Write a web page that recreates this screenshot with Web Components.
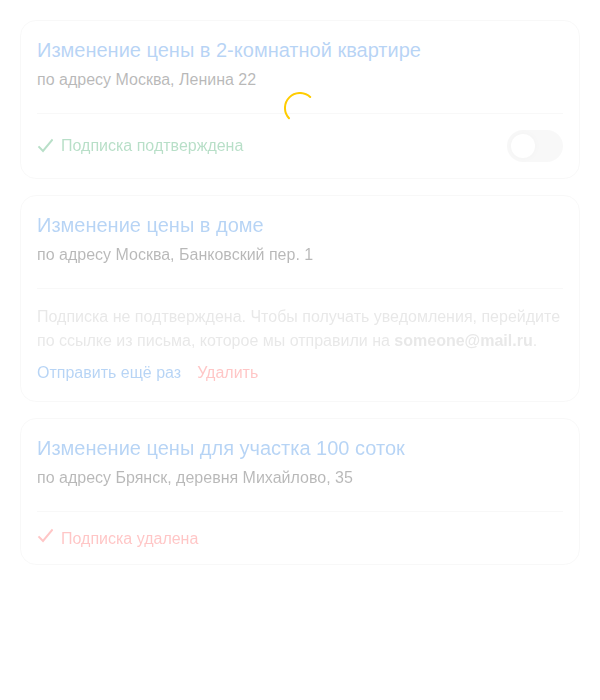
<!DOCTYPE html>
<html lang="ru">
<head>
<meta charset="utf-8">
<title>Подписки</title>
<style>
body { margin: 0; background: #fff; font-family: "Liberation Sans", Arial, sans-serif; }
</style>
</head>
<body>
<subscription-list>
  <subscription-card>
    <span slot="title">Изменение цены в 2-комнатной квартире</span>
    <span slot="address">по адресу Москва, Ленина 22</span>
    <status-row kind="ok">Подписка подтверждена<toggle-switch slot="action"></toggle-switch></status-row>
  </subscription-card>
  <subscription-card>
    <span slot="title">Изменение цены в доме</span>
    <span slot="address">по адресу Москва, Банковский пер. 1</span>
    <pending-notice email="someone@mail.ru"></pending-notice>
  </subscription-card>
  <subscription-card>
    <span slot="title">Изменение цены для участка 100 соток</span>
    <span slot="address">по адресу Брянск, деревня Михайлово, 35</span>
    <status-row kind="removed">Подписка удалена</status-row>
  </subscription-card>
</subscription-list>
<script>
function define(name, html, setup) {
  const t = document.createElement('template');
  t.innerHTML = html;
  customElements.define(name, class extends HTMLElement {
    connectedCallback() {
      if (this.shadowRoot) return;
      this.attachShadow({ mode: 'open' }).append(t.content.cloneNode(true));
      if (setup) setup(this, this.shadowRoot);
    }
  });
}

define('loading-spinner', `
<style>
:host { display: block; width: 32px; height: 32px; }
svg { display: block; }
</style>
<svg width="32" height="32" viewBox="0 0 32 32" fill="none"><path d="M5 26.2A15 15 0 0 1 26.2 5" stroke="#fc0" stroke-width="2" stroke-linecap="round"/></svg>`);

define('subscription-list', `
<style>
:host { display: block; position: relative; padding: 20px; }
.cards { display: flex; flex-direction: column; gap: 16px; opacity: .3; }
/* The spinner floats above the faded cards */
loading-spinner { position: absolute; top: 92px; left: 50%; margin-left: -16px; }
</style>
<div class="cards"><slot></slot></div>
<loading-spinner></loading-spinner>`);

define('subscription-card', `
<style>
:host { display: block; box-sizing: border-box; padding: 16px; border: 1px solid #e8e8e8; border-radius: 16px; background: #fff; color: #121212; }
.title { font-size: 20px; line-height: 26px; color: #1070de; }
.address { margin-top: 5px; font-size: 16px; line-height: 24px; }
.body { margin-top: 21px; padding-top: 16px; border-top: 1px solid #e8e8e8; }
</style>
<div class="title"><slot name="title"></slot></div>
<div class="address"><slot name="address"></slot></div>
<div class="body"><slot></slot></div>`);

define('status-row', `
<style>
:host { display: flex; justify-content: space-between; align-items: center; font-size: 16px; line-height: 20px; color: #129447; }
:host([kind=removed]) { color: #ff4040; }
.label { display: flex; gap: 8px; }
svg { flex: none; width: 16px; height: 16px; margin-top: 2px; }
:host([kind=removed]) svg { margin-top: 0; }
:host([kind=removed]) .text { padding-top: 2px; line-height: 18px; }
</style>
<div class="label"><svg viewBox="0 0 16 16" fill="none"><path d="M1.5 8.4L6 13L15.6 1.5" stroke="currentColor" stroke-width="2"/></svg><span class="text"><slot></slot></span></div>
<slot name="action"></slot>`);

define('toggle-switch', `
<style>
:host { display: block; box-sizing: border-box; width: 56px; height: 32px; padding: 4px; border-radius: 16px; background: #e8e8e8; }
.knob { width: 24px; height: 24px; border-radius: 50%; background: #fff; box-shadow: 0 0 8px rgba(0,0,0,.08); }
</style>
<div class="knob"></div>`);

define('pending-notice', `
<style>
:host { display: block; font-size: 16px; line-height: 24px; }
.text { color: #b2b2b2; }
.links { display: flex; gap: 16px; margin-top: 8px; color: #1070de; }
.delete { color: #ff4040; }
</style>
<div class="text">Подписка не подтверждена. Чтобы получать уведомления, перейдите по ссылке из письма, которое мы отправили на <b></b>.</div>
<div class="links"><span>Отправить ещё раз</span><span class="delete">Удалить</span></div>`,
(el, root) => { root.querySelector('b').textContent = el.getAttribute('email'); });
</script>
</body>
</html>
